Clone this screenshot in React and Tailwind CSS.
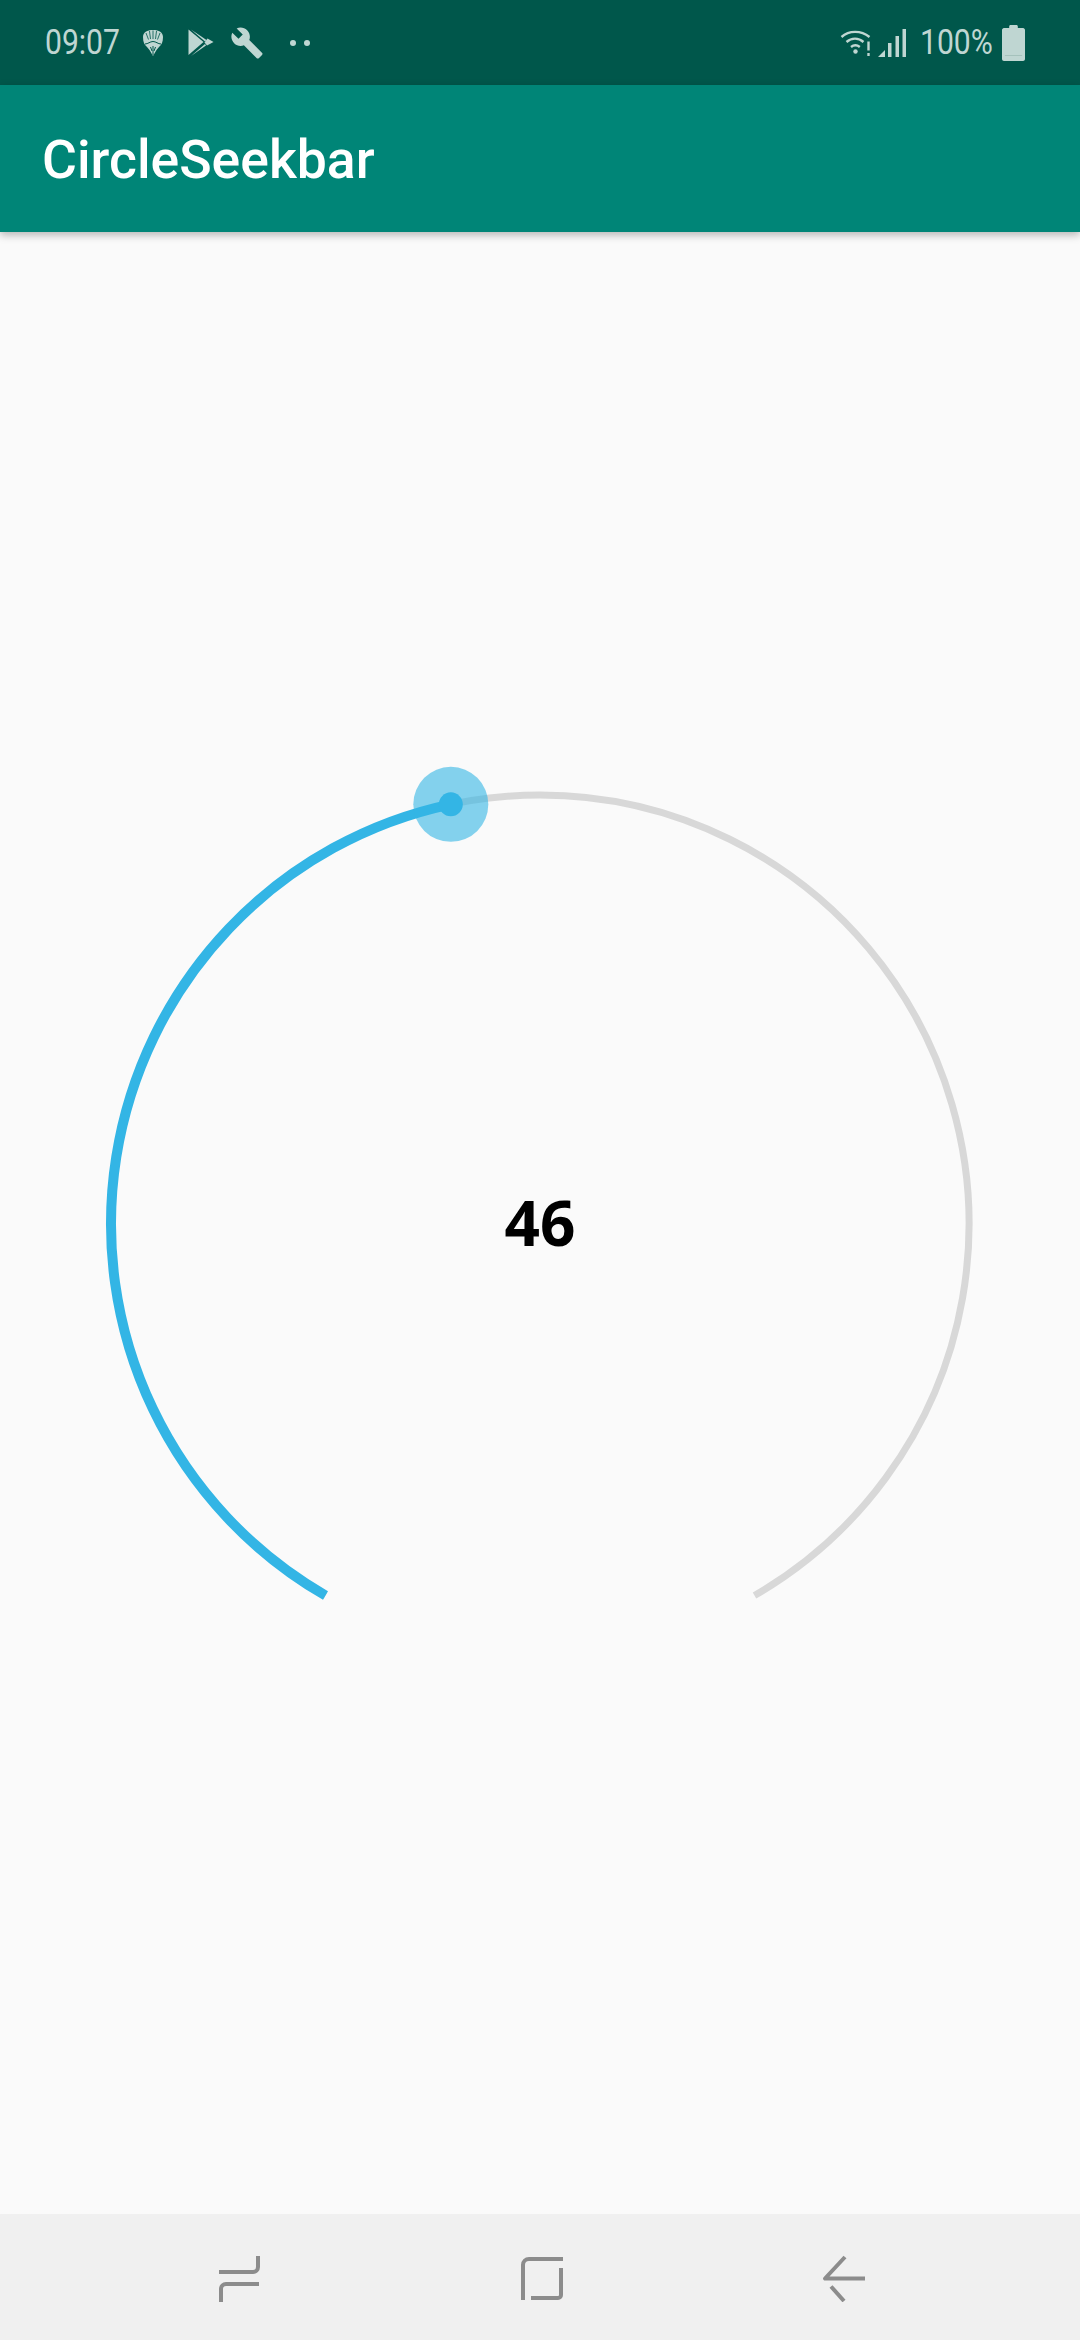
import { MdBuild } from 'react-icons/md'

const ICON = '#BFD6D2'
const NAV = '#8C8C8C'

// seekbar geometry, angles are clockwise from the top
const CX = 540
const CY = 541
const R = 429
const START = -150
const SWEEP = 300
const VALUE = 46

const point = (deg) => {
  const a = (deg * Math.PI) / 180
  return [CX + R * Math.sin(a), CY - R * Math.cos(a)]
}

const arc = (from, to) => {
  const [x1, y1] = point(from)
  const [x2, y2] = point(to)
  const large = to - from > 180 ? 1 : 0
  return `M${x1} ${y1}A${R} ${R} 0 ${large} 1 ${x2} ${y2}`
}

function CircleSeekbar() {
  const end = START + (SWEEP * VALUE) / 100
  const [tx, ty] = point(end)
  return (
    <div className="relative w-[1080px] h-[1080px]">
      <svg width="1080" height="1080" viewBox="0 0 1080 1080" fill="none">
        <path d={arc(START, START + SWEEP)} stroke="#D8D8D8" strokeWidth="7" />
        <path d={arc(START, end)} stroke="#33B5E5" strokeWidth="10" />
        <circle cx={tx} cy={ty} r="37.5" fill="#33B5E5" fillOpacity="0.6" />
        <circle cx={tx} cy={ty} r="12" fill="#33B5E5" />
      </svg>
      <div className="absolute inset-0 flex items-center justify-center pb-[3px]">
        <span className="text-[62px] leading-none font-bold text-black font-['Noto_Sans',sans-serif]">{VALUE}</span>
      </div>
    </div>
  )
}

function LionIcon() {
  return (
    <svg width="22" height="27" viewBox="0 0 22 27" className="ml-[23px]" fill="none" stroke={ICON}>
      <path d="M11 1C5 1 1 3.500 1 8c0 5 1.500 8 4 10l2.500 3 3.500 6 3.500-6 2.500-3c2.500-2 4-5 4-10 0-4.500-4-7-10-7z" fill={ICON} stroke="none" />
      <path d="M7.500 2l1 8M11 1.500V10M14.500 2l-1 8M4 4l2.500 6.500M18 4l-2.500 6.500" stroke="#00574B" strokeWidth="0.800" />
      <path d="M3 15c3 0 5-2.500 8-2.500s5 2.500 8 2.500M11 17v9M8.500 18l1.500 4M13.500 18L12 22" stroke="#00574B" strokeWidth="1" />
    </svg>
  )
}

function PlayIcon() {
  return (
    <svg width="26" height="28" viewBox="0 0 26 28" className="ml-[24px]" fill={ICON}>
      <path d="M0.500 0.500V26L15.500 13z" />
      <path d="M3 0.500L18.500 11 17 12.500z" />
      <path d="M25.500 13L19.500 9.500 16.500 13.500 19 16.500z" />
      <path d="M3 27L18 16.500 17 15z" />
    </svg>
  )
}

function WifiIcon() {
  return (
    <svg width="32" height="28" viewBox="0 0 32 28" fill="none" stroke={ICON} strokeWidth="2.400">
      <path d="M1.500 8C9 1.200 21 1.200 29.500 8" />
      <path d="M6.500 13c5-4.500 12-4.500 17 0" />
      <path d="M11 18c2.800-2.300 6-2.300 8.800 0" />
      <circle cx="15.500" cy="22.500" r="2.200" fill={ICON} stroke="none" />
      <path d="M28.500 12.500v9" />
      <path d="M28.500 24v3" />
    </svg>
  )
}

function SignalIcon() {
  return (
    <svg width="28" height="28" viewBox="0 0 28 28" fill={ICON} className="ml-[6px]">
      <path d="M0 28L7 21v7z" />
      <rect x="10" y="14" width="3.500" height="14" />
      <rect x="17.500" y="7" width="3.500" height="21" />
      <rect x="24.500" y="0" width="3.500" height="28" />
    </svg>
  )
}

function BatteryIcon() {
  return (
    <svg width="23" height="36" viewBox="0 0 24 36" preserveAspectRatio="none" fill={ICON} className="ml-[12px]">
      <path d="M7.500 1.500C7.500 .700 8 0 9 0h6c1 0 1.500.700 1.500 1.500V3H22c1 0 2 1 2 2v29c0 1-1 2-2 2H2c-1 0-2-1-2-2V5c0-1 1-2 2-2h5.500z" />
      <rect x="3" y="30" width="18" height="1" fill="#A5C2BC" />
    </svg>
  )
}

function RecentsIcon() {
  return (
    <svg width="42" height="48" viewBox="0 0 42 48" fill="none" stroke={NAV} strokeWidth="4">
      <path d="M40 2v11a5 5 0 0 1-5 5H1" />
      <path d="M41 30H8a5 5 0 0 0-5 5v13" />
    </svg>
  )
}

function HomeIcon() {
  return (
    <svg width="44" height="46" viewBox="0 0 44 46" fill="none" stroke={NAV} strokeWidth="4">
      <path d="M3 45V10a6 6 0 0 1 6-6h34" />
      <path d="M41 13v27a3 3 0 0 1-3 3H11" />
    </svg>
  )
}

function BackIcon() {
  return (
    <svg width="44" height="48" viewBox="0 0 44 48" fill="none" stroke={NAV} strokeWidth="4" strokeLinejoin="round">
      <path d="M23 3L3 24.500h40" />
      <path d="M9 32.500L22 47" />
    </svg>
  )
}

export default function App() {
  return (
    <div className="flex flex-col w-[1080px] h-[2340px] bg-[#FAFAFA] font-['Roboto',sans-serif]">
      {/* Status bar */}
      <div className="flex items-center h-[85px] bg-[#00574B] pl-[45px] pr-[55px]">
        <span className="w-[74px] text-[35px] leading-none text-[#BFD6D2] origin-left scale-x-[0.86]">09:07</span>
        <LionIcon />
        <PlayIcon />
        <MdBuild size={34} color={ICON} className="ml-[16px]" />
        <div className="flex gap-[8px] ml-[26px]">
          <span className="w-[6px] h-[6px] rounded-full bg-[#BFD6D2]" />
          <span className="w-[6px] h-[6px] rounded-full bg-[#BFD6D2]" />
        </div>
        <div className="flex items-center ml-auto">
          <WifiIcon />
          <SignalIcon />
          <span className="w-[70px] ml-[14px] text-[35px] leading-none text-[#BFD6D2] origin-left scale-x-[0.86] whitespace-nowrap">100%</span>
          <BatteryIcon />
        </div>
      </div>

      {/* App bar */}
      <div className="z-10 flex items-center h-[147px] bg-[#008577] pl-[42px] pt-[4px] shadow-[0_3px_8px_rgba(0,0,0,0.28)]">
        <h1 className="text-[53.5px] font-medium text-white">CircleSeekbar</h1>
      </div>

      <main className="flex-1 flex items-center justify-center">
        <CircleSeekbar />
      </main>

      {/* Navigation bar */}
      <div className="flex items-center h-[126px] bg-[#F0F0F0] pl-[218px] pt-[2px]">
        <RecentsIcon />
        <div className="ml-[260px]"><HomeIcon /></div>
        <div className="ml-[258px]"><BackIcon /></div>
      </div>
    </div>
  )
}
